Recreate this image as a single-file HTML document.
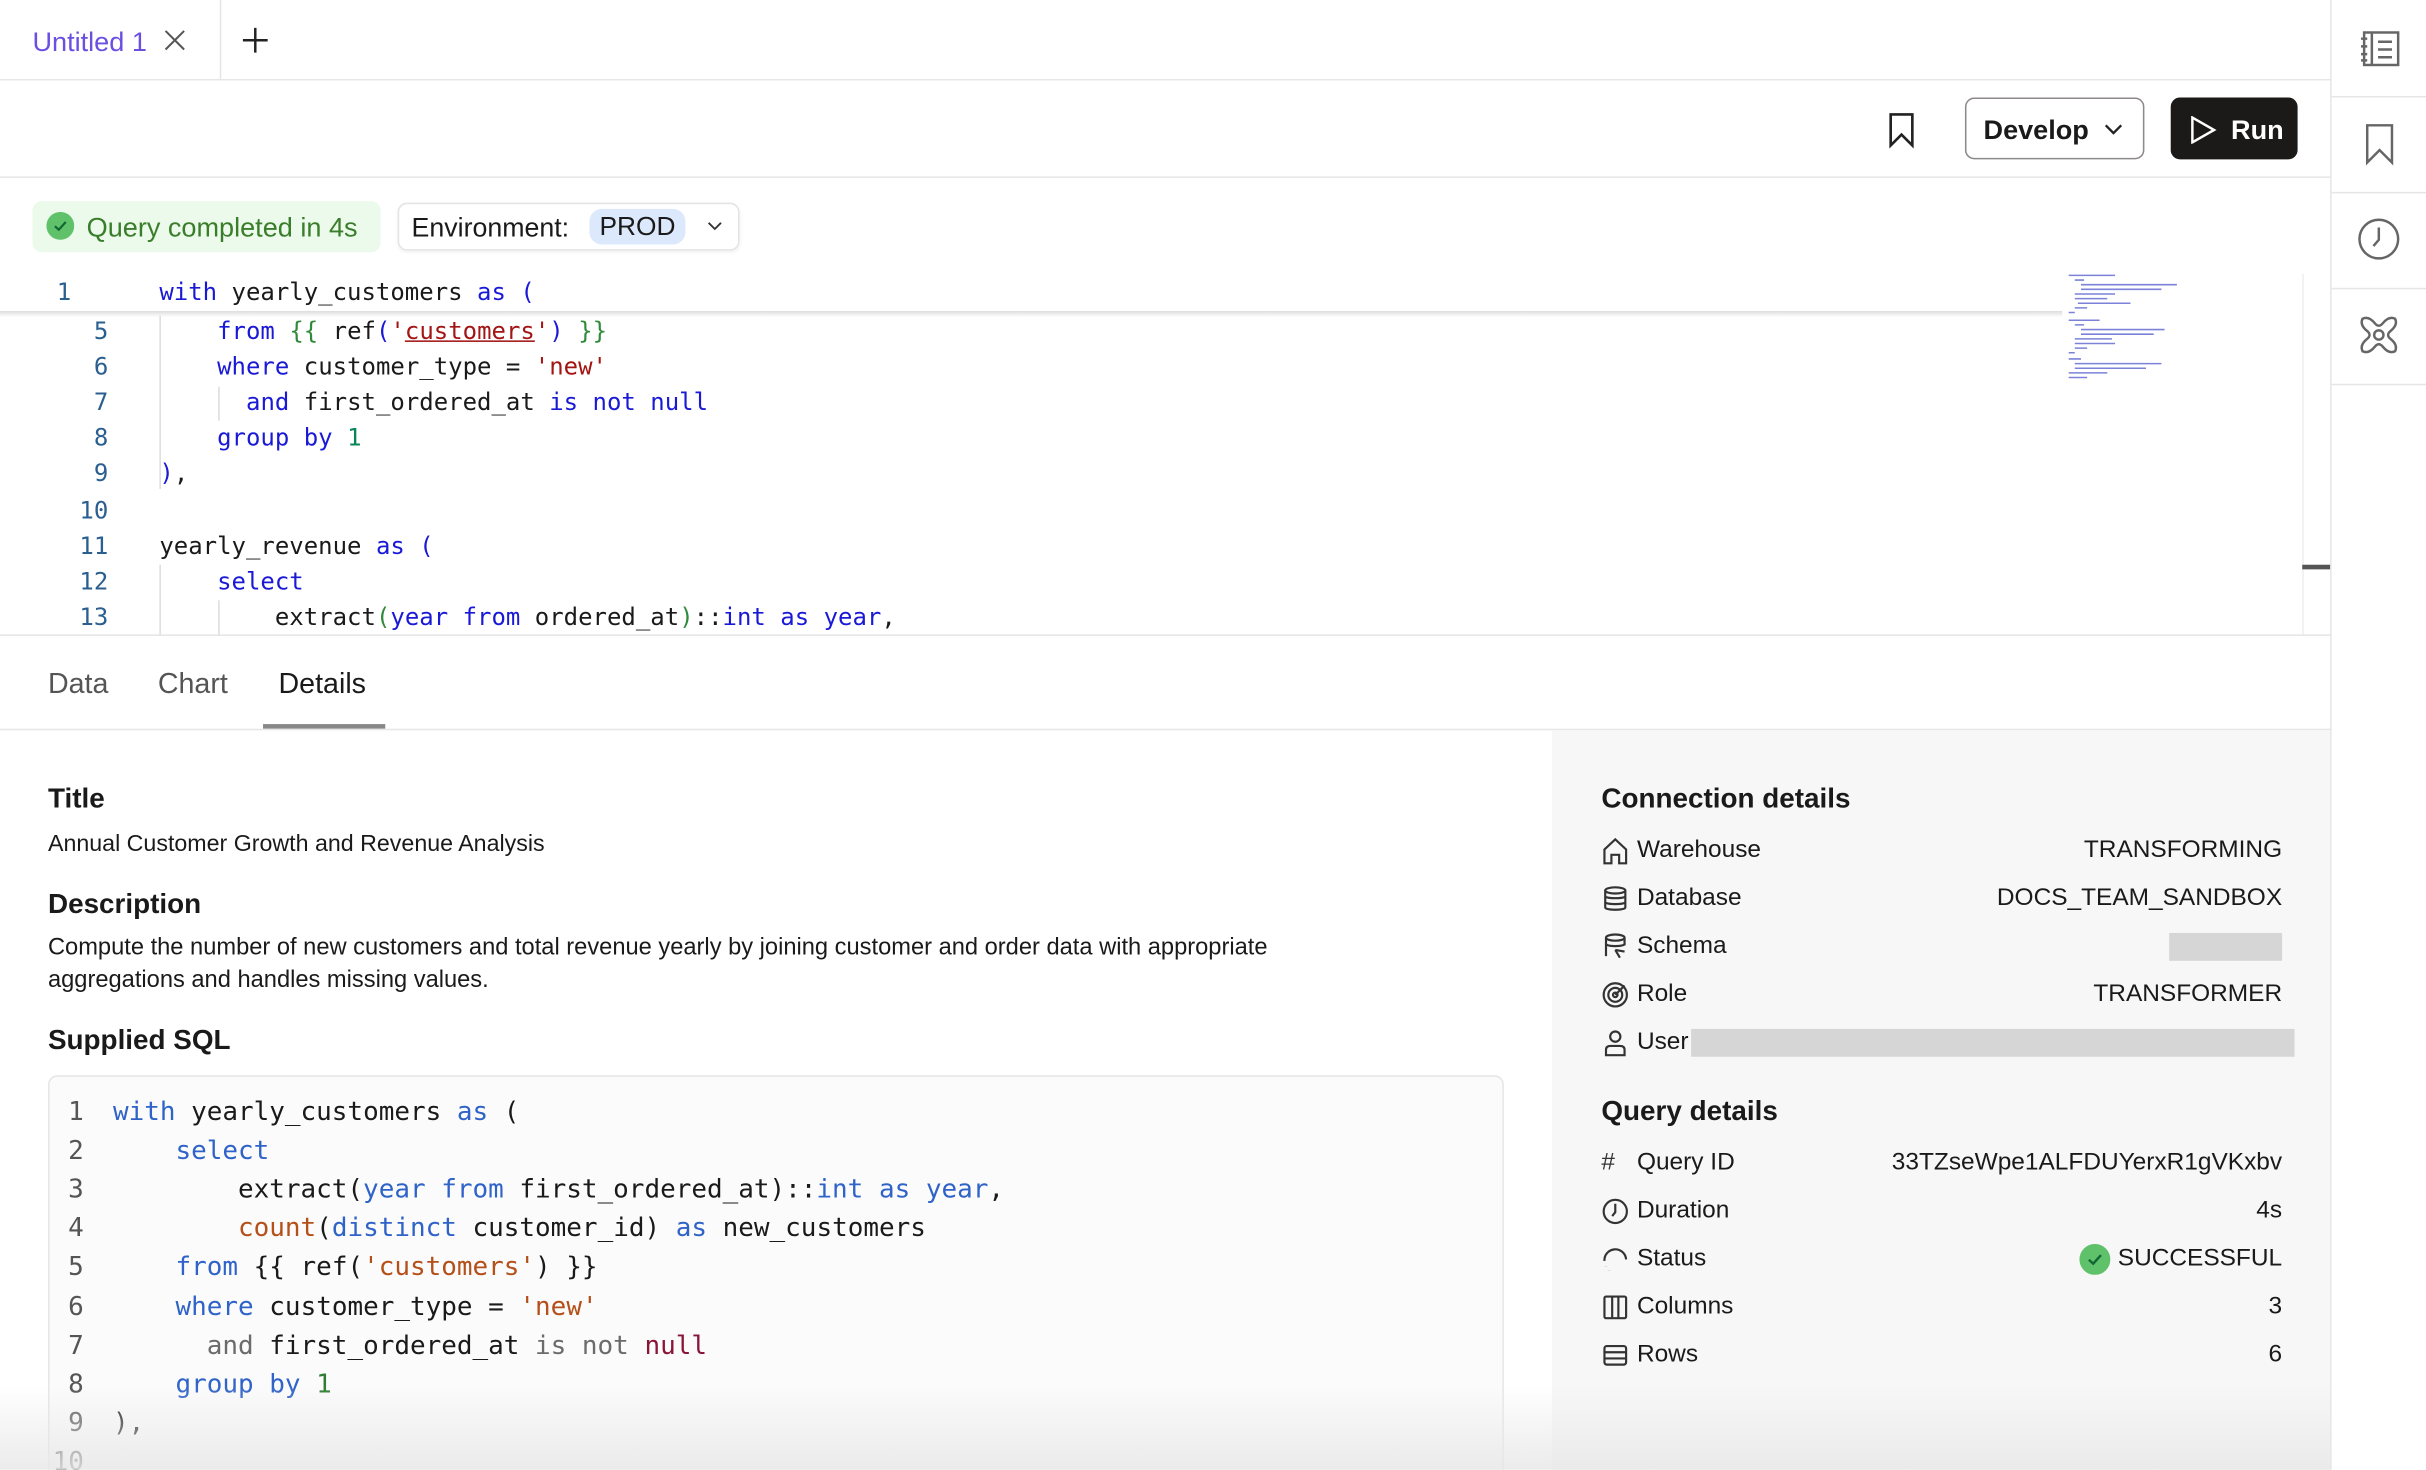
<!DOCTYPE html>
<html><head><meta charset="utf-8"><style>
*{box-sizing:border-box;margin:0;padding:0}
html,body{width:2426px;height:1470px;overflow:hidden;background:#fff}
#s{position:absolute;left:0;top:0;width:1568px;height:950px;transform:scale(1.5472);transform-origin:0 0;font-family:"Liberation Sans",sans-serif;color:#1a1a1a;overflow:hidden}
.a{position:absolute}
.mono{font-family:"DejaVu Sans Mono","Liberation Mono",monospace}
.k{color:#1a1ad6}.g{color:#2f8a3a}.r{color:#a31515}.n{color:#098658}
.k2{color:#2f63c8}.o{color:#b4501a}.gr{color:#6b6b6b}.m{color:#8a1538}.g2{color:#2e7d32}
.ln{position:absolute;width:40px;text-align:right;color:#2a5f8f}
.row{position:absolute;left:1035px;width:440px;height:22px;font-size:15.8px;display:flex;align-items:center}
.row svg{width:18px;height:18px;margin-right:5px;fill:none;stroke:#333;stroke-width:1.4}
.row .v{margin-left:auto}
</style></head><body><div id="s">
<!-- tab bar -->
<div class="a" style="left:0;top:51px;width:1507px;height:1px;background:#e6e6e6"></div>
<div class="a" style="left:21px;top:17px;font-size:17.5px;color:#6a4fe0">Untitled 1</div>
<svg class="a" style="left:106px;top:19px" width="14" height="14" viewBox="0 0 14 14"><path d="M1 1L13 13M13 1L1 13" stroke="#555" stroke-width="1.3"/></svg>
<div class="a" style="left:142px;top:0;width:1px;height:52px;background:#e6e6e6"></div>
<svg class="a" style="left:156px;top:17px" width="18" height="18" viewBox="0 0 18 18"><path d="M9 1V17M1 9H17" stroke="#222" stroke-width="1.6"/></svg>
<!-- right sidebar -->
<div class="a" style="left:1506px;top:0;width:1px;height:950px;background:#e6e6e6"></div>
<div class="a" style="left:1507px;top:62px;width:61px;height:1px;background:#e6e6e6"></div>
<div class="a" style="left:1507px;top:124px;width:61px;height:1px;background:#e6e6e6"></div>
<div class="a" style="left:1507px;top:186px;width:61px;height:1px;background:#e6e6e6"></div>
<div class="a" style="left:1507px;top:248px;width:61px;height:1px;background:#e6e6e6"></div>
<svg class="a" style="left:1524px;top:17px" width="28" height="28" viewBox="0 0 28 28" fill="none" stroke="#666" stroke-width="1.6"><rect x="4" y="4" width="22" height="21"/><path d="M9 4V25M2 8H6M2 13H6M2 18H6M2 22H6M13 10H22M13 15H22M13 20H22"/></svg>
<svg class="a" style="left:1527px;top:79px" width="22" height="28" viewBox="0 0 22 28" fill="none" stroke="#666" stroke-width="1.6"><path d="M3 2H19V26L11 18L3 26Z"/></svg>
<svg class="a" style="left:1523px;top:140px" width="29" height="29" viewBox="0 0 29 29" fill="none" stroke="#666" stroke-width="1.6"><circle cx="14.5" cy="14.5" r="12.5"/><path d="M14.5 7V15L11 19"/></svg>
<svg class="a" style="left:1523px;top:202px" width="29" height="29" viewBox="0 0 29 29" fill="none" stroke="#666" stroke-width="1.6"><path d="M4 4Q8 2 12 7Q14.5 10 17 7Q21 2 25 4Q27 8 22 12Q19 14.5 22 17Q27 21 25 25Q21 27 17 22Q14.5 19 12 22Q8 27 4 25Q2 21 7 17Q10 14.5 7 12Q2 8 4 4Z"/><circle cx="14.5" cy="14.5" r="3"/></svg>
<!-- toolbar -->
<div class="a" style="left:0;top:114px;width:1507px;height:1px;background:#e6e6e6"></div>
<svg class="a" style="left:1220px;top:72px" width="18" height="24" viewBox="0 0 18 24" fill="none" stroke="#222" stroke-width="1.7"><path d="M2 2H16V22L9 15L2 22Z"/></svg>
<div class="a" style="left:1270px;top:63px;width:116px;height:40px;border:1px solid #8e8a8a;border-radius:6px"></div>
<div class="a" style="left:1282px;top:74px;font-size:17.5px;font-weight:bold;color:#1a1a1a">Develop</div>
<svg class="a" style="left:1360px;top:80px" width="12" height="8" viewBox="0 0 12 8" fill="none" stroke="#222" stroke-width="1.5"><path d="M1 1L6 6L11 1"/></svg>
<div class="a" style="left:1403px;top:63px;width:82px;height:40px;background:#1b1a19;border-radius:6px"></div>
<svg class="a" style="left:1415px;top:75px" width="18" height="18" viewBox="0 0 18 18" fill="none" stroke="#fff" stroke-width="1.6"><path d="M2 1L16 9L2 17Z"/></svg>
<div class="a" style="left:1442px;top:74px;font-size:17.5px;font-weight:bold;color:#fff">Run</div>
<!-- status -->
<div class="a" style="left:21px;top:130px;width:225px;height:33px;background:#ebfaea;border-radius:6px"></div>
<svg class="a" style="left:30px;top:137px" width="18" height="18" viewBox="0 0 18 18"><circle cx="9" cy="9" r="9" fill="#5fc26a"/><path d="M5.5 9.2L8 11.5L12.5 6.5" stroke="#163" stroke-width="1.4" fill="none"/></svg>
<div class="a" style="left:56px;top:137px;font-size:17.5px;color:#3a7d2a">Query completed in 4s</div>
<div class="a" style="left:257px;top:131px;width:221px;height:31px;border:1px solid #e4e4e4;border-radius:6px;box-shadow:0 1px 2px rgba(0,0,0,.06)"></div>
<div class="a" style="left:266px;top:137px;font-size:17.3px">Environment:</div>
<div class="a" style="left:381px;top:135px;width:62px;height:23px;background:#dce9fc;border-radius:8px;font-size:17px;text-align:center;line-height:23px">PROD</div>
<svg class="a" style="left:457px;top:143px" width="10" height="7" viewBox="0 0 10 7" fill="none" stroke="#333" stroke-width="1.2"><path d="M1 1L5 5L9 1"/></svg>
<!-- editor -->
<div class="mono" style="position:absolute;left:0;top:1px;font-size:15.5px;line-height:23px;white-space:pre">
<div class="a" style="left:0;top:200px;width:1333px;height:4px;background:linear-gradient(#ddd,rgba(255,255,255,0))"></div>
<div class="ln" style="left:6px;top:177px">1</div><div class="a" style="left:103px;top:177px"><span class="k">with</span> yearly_customers <span class="k">as</span> <span class="k">(</span></div>
<div class="a" style="left:103px;top:203px;width:1px;height:112px;background:#ddd"></div>
<div class="a" style="left:141px;top:249px;width:1px;height:22px;background:#ddd"></div>
<div class="a" style="left:103px;top:364px;width:1px;height:46px;background:#ddd"></div>
<div class="a" style="left:141px;top:387px;width:1px;height:23px;background:#ddd"></div>
<div class="ln" style="left:30px;top:202px">5</div><div class="a" style="left:103px;top:202px">    <span class="k">from</span> <span class="g">{{</span> ref<span class="k">(</span><span class="r">'<u>customers</u>'</span><span class="k">)</span> <span class="g">}}</span></div>
<div class="ln" style="left:30px;top:225px">6</div><div class="a" style="left:103px;top:225px">    <span class="k">where</span> customer_type = <span class="r">'new'</span></div>
<div class="ln" style="left:30px;top:248px">7</div><div class="a" style="left:103px;top:248px">      <span class="k">and</span> first_ordered_at <span class="k">is not null</span></div>
<div class="ln" style="left:30px;top:271px">8</div><div class="a" style="left:103px;top:271px">    <span class="k">group by</span> <span class="n">1</span></div>
<div class="ln" style="left:30px;top:294px">9</div><div class="a" style="left:103px;top:294px"><span class="k">)</span>,</div>
<div class="ln" style="left:30px;top:318px">10</div>
<div class="ln" style="left:30px;top:341px">11</div><div class="a" style="left:103px;top:341px">yearly_revenue <span class="k">as</span> <span class="k">(</span></div>
<div class="ln" style="left:30px;top:364px">12</div><div class="a" style="left:103px;top:364px">    <span class="k">select</span></div>
<div class="ln" style="left:30px;top:387px">13</div><div class="a" style="left:103px;top:387px">        extract<span class="g">(</span><span class="k">year from</span> ordered_at<span class="g">)</span>::<span class="k">int as year</span>,</div>
</div>
<!-- minimap -->
<svg class="a" style="left:1337px;top:177px" width="75" height="70" viewBox="0 0 75 70" stroke-width="1"><g stroke="#7b82d8"><path d="M0 1H30M4 4H10M8 7H70M8 10H60M4 13H30M4 16H25M6 19H40M4 22H12M0 25H4M0 30H20M4 33H10M8 36H62M8 39H55M4 42H28M4 45H30M4 48H12M0 51H4M0 55H8M4 58H60M4 61H50M0 64H25M0 67H12"/></g></svg>
<div class="a" style="left:1488px;top:177px;width:1px;height:233px;background:#eee"></div>
<div class="a" style="left:1488px;top:365px;width:18px;height:3px;background:#555"></div>
<div class="a" style="left:0;top:410px;width:1507px;height:1px;background:#e6e6e6"></div>
<!-- result tabs -->
<div class="a" style="left:31px;top:431px;font-size:18.5px;color:#555">Data</div>
<div class="a" style="left:102px;top:431px;font-size:18.5px;color:#555">Chart</div>
<div class="a" style="left:180px;top:431px;font-size:18.5px;color:#1a1a1a">Details</div>
<div class="a" style="left:170px;top:468px;width:79px;height:3px;background:#888"></div>
<div class="a" style="left:0;top:471px;width:1507px;height:1px;background:#e6e6e6"></div>
<!-- left details -->
<div class="a" style="left:31px;top:506px;font-size:18px;font-weight:bold">Title</div>
<div class="a" style="left:31px;top:537px;font-size:15px">Annual Customer Growth and Revenue Analysis</div>
<div class="a" style="left:31px;top:574px;font-size:18px;font-weight:bold">Description</div>
<div class="a" style="left:31px;top:602px;width:856px;font-size:15.3px;line-height:21px">Compute the number of new customers and total revenue yearly by joining customer and order data with appropriate aggregations and handles missing values.</div>
<div class="a" style="left:31px;top:662px;font-size:18px;font-weight:bold">Supplied SQL</div>
<div class="a" style="left:31px;top:695px;width:941px;height:280px;background:#fbfbfb;border:1px solid #e6e6e6;border-radius:6px"></div>
<div class="mono a" style="left:0;top:1px;font-size:16.8px;line-height:25.1px;white-space:pre">
<div class="a" style="left:44px;top:705px;color:#555">1</div><div class="a" style="left:73px;top:705px"><span class="k2">with</span> yearly_customers <span class="k2">as</span> (</div>
<div class="a" style="left:44px;top:730px;color:#555">2</div><div class="a" style="left:73px;top:730px">    <span class="k2">select</span></div>
<div class="a" style="left:44px;top:755px;color:#555">3</div><div class="a" style="left:73px;top:755px">        extract(<span class="k2">year from</span> first_ordered_at)::<span class="k2">int as year</span>,</div>
<div class="a" style="left:44px;top:780px;color:#555">4</div><div class="a" style="left:73px;top:780px">        <span class="o">count</span>(<span class="k2">distinct</span> customer_id) <span class="k2">as</span> new_customers</div>
<div class="a" style="left:44px;top:805px;color:#555">5</div><div class="a" style="left:73px;top:805px">    <span class="k2">from</span> {{ ref(<span class="o">'customers'</span>) }}</div>
<div class="a" style="left:44px;top:831px;color:#555">6</div><div class="a" style="left:73px;top:831px">    <span class="k2">where</span> customer_type = <span class="o">'new'</span></div>
<div class="a" style="left:44px;top:856px;color:#555">7</div><div class="a" style="left:73px;top:856px">      <span class="gr">and</span> first_ordered_at <span class="gr">is not</span> <span class="m">null</span></div>
<div class="a" style="left:44px;top:881px;color:#555">8</div><div class="a" style="left:73px;top:881px">    <span class="k2">group by</span> <span class="g2">1</span></div>
<div class="a" style="left:44px;top:906px;color:#555">9</div><div class="a" style="left:73px;top:906px">),</div>
<div class="a" style="left:34px;top:931px;color:#555">10</div>
</div>
<!-- right panel -->
<div class="a" style="left:1003px;top:472px;width:503px;height:478px;background:#f7f7f7"></div>
<div class="a" style="left:1035px;top:506px;font-size:18px;font-weight:bold">Connection details</div>
<div class="row" style="top:539px"><svg viewBox="0 0 18 18"><path d="M2 17V8L9 1.5L16 8V17H11.5V11.5H6.5V17Z"/></svg>Warehouse<span class="v">TRANSFORMING</span></div>
<div class="row" style="top:570px"><svg viewBox="0 0 18 18"><ellipse cx="9" cy="3.5" rx="6.5" ry="2"/><path d="M2.5 3.5V14.5C2.5 16.5 15.5 16.5 15.5 14.5V3.5M2.5 7.2C2.5 9 15.5 9 15.5 7.2M2.5 11C2.5 12.8 15.5 12.8 15.5 11"/></svg>Database<span class="v">DOCS_TEAM_SANDBOX</span></div>
<div class="row" style="top:601px"><svg viewBox="0 0 18 18"><ellipse cx="9" cy="3" rx="6" ry="2"/><path d="M3 3V15M15 3V8M3 7C3 9 15 9 15 7M9 11L15 12M9 11L12 16"/></svg>Schema<span class="v" style="width:73px;height:18px;background:#d6d6d6"></span></div>
<div class="row" style="top:632px"><svg viewBox="0 0 18 18"><circle cx="9" cy="9" r="7.5"/><circle cx="9" cy="9" r="4.5"/><circle cx="9" cy="9" r="1.5"/><path d="M9 9L15 3"/></svg>Role<span class="v">TRANSFORMER</span></div>
<div class="row" style="top:663px;width:448px"><svg viewBox="0 0 18 18"><circle cx="9" cy="5" r="3.3"/><path d="M3 17V13.5Q3 11 6 11H12Q15 11 15 13.5V17Z"/></svg>User<span style="margin-left:2px;flex:1;height:18px;background:#d6d6d6"></span></div>
<div class="a" style="left:1035px;top:708px;font-size:18px;font-weight:bold">Query details</div>
<div class="row" style="top:741px"><span style="width:18px;margin-right:5px;color:#333">#</span>Query ID<span class="v">33TZseWpe1ALFDUYerxR1gVKxbv</span></div>
<div class="row" style="top:772px"><svg viewBox="0 0 18 18"><circle cx="9" cy="9" r="7.5"/><path d="M9 4V9.5L7 12"/></svg>Duration<span class="v">4s</span></div>
<div class="row" style="top:803px"><svg viewBox="0 0 18 18"><path d="M2 10A7 7 0 0 1 16 9" /><path d="M3 13.5V13.6M5 16V16.1" stroke-width="1.8"/></svg>Status<span class="v" style="display:flex;align-items:center"><svg viewBox="0 0 18 18" style="width:20px;height:20px;stroke:none"><circle cx="9" cy="9" r="9" fill="#5fc26a"/><path d="M5.5 9.2L8 11.5L12.5 6.5" stroke="#163" stroke-width="1.4" fill="none"/></svg>SUCCESSFUL</span></div>
<div class="row" style="top:834px"><svg viewBox="0 0 18 18"><rect x="2" y="2" width="14" height="14" rx="1"/><path d="M7 2V16M11 2V16"/></svg>Columns<span class="v">3</span></div>
<div class="row" style="top:865px"><svg viewBox="0 0 18 18"><rect x="2" y="3" width="14" height="12" rx="1.5"/><path d="M2 7H16M2 11H16"/></svg>Rows<span class="v">6</span></div>
<!-- bottom fade -->
<div class="a" style="left:0;top:895px;width:1507px;height:55px;background:linear-gradient(rgba(235,235,235,0),rgba(232,232,232,.85))"></div>
</div></body></html>
